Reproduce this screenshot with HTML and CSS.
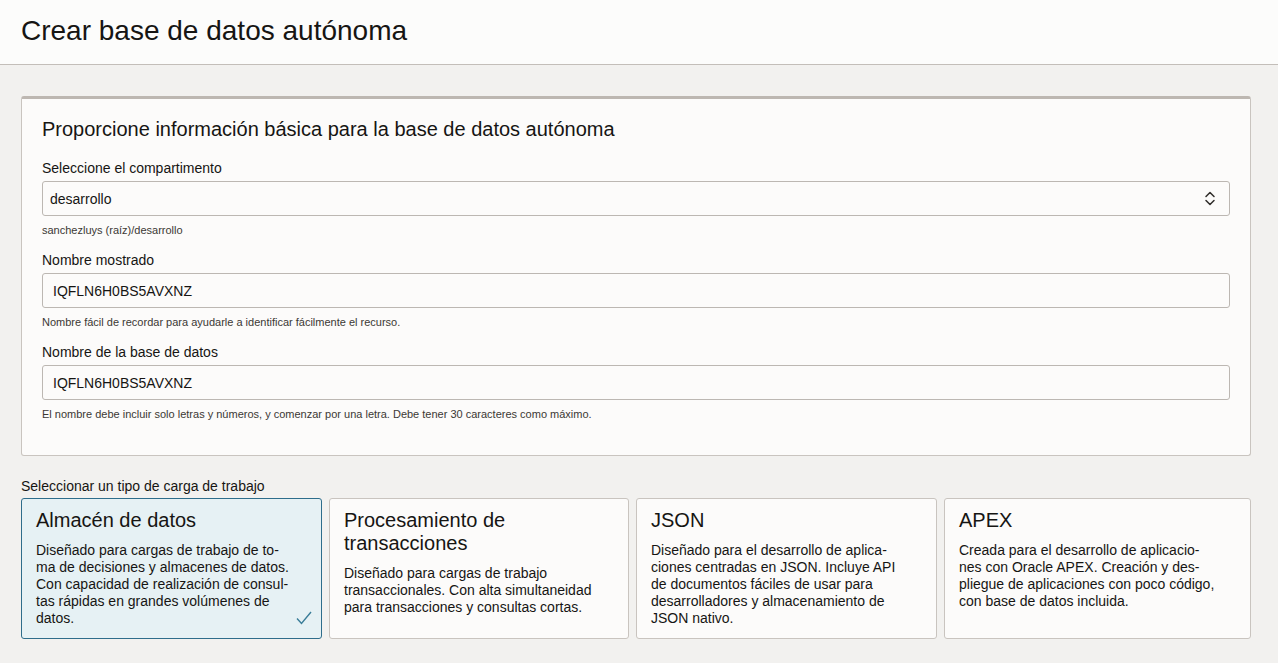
FILE: index.html
```html
<!DOCTYPE html>
<html lang="es">
<head>
<meta charset="utf-8">
<title>Crear base de datos autónoma</title>
<link rel="stylesheet" href="styles.css">
</head>
<body>
<header class="page-header">
  <h1 class="page-title">Crear base de datos autónoma</h1>
</header>
<main class="content">
  <section class="panel">
    <h2 class="panel-title">Proporcione información básica para la base de datos autónoma</h2>
    <div class="field">
      <label class="field-label">Seleccione el compartimento</label>
      <div class="control select">
        <span class="select-value">desarrollo</span>
        <svg class="select-icon" width="12" height="17" viewBox="0 0 12 17" aria-hidden="true">
          <path d="M2 6.5 L6 2.5 L10 6.5" fill="none" stroke="#2f2c29" stroke-width="1.5" stroke-linecap="round" stroke-linejoin="round"/>
          <path d="M2 10.5 L6 14.5 L10 10.5" fill="none" stroke="#2f2c29" stroke-width="1.5" stroke-linecap="round" stroke-linejoin="round"/>
        </svg>
      </div>
      <div class="field-help">sanchezluys (raíz)/desarrollo</div>
    </div>
    <div class="field">
      <label class="field-label">Nombre mostrado</label>
      <div class="control text">IQFLN6H0BS5AVXNZ</div>
      <div class="field-help">Nombre fácil de recordar para ayudarle a identificar fácilmente el recurso.</div>
    </div>
    <div class="field">
      <label class="field-label">Nombre de la base de datos</label>
      <div class="control text">IQFLN6H0BS5AVXNZ</div>
      <div class="field-help">El nombre debe incluir solo letras y números, y comenzar por una letra. Debe tener 30 caracteres como máximo.</div>
    </div>
  </section>

  <div class="workload-label">Seleccionar un tipo de carga de trabajo</div>
  <div class="cards">
    <div class="card selected">
      <div class="card-title">Almacén de datos</div>
      <div class="card-desc">Diseñado para cargas de trabajo de to-<br>ma de decisiones y almacenes de datos.<br>Con capacidad de realización de consul-<br>tas rápidas en grandes volúmenes de<br>datos.</div>
      <svg class="card-check" width="16" height="14" viewBox="0 0 16 14" aria-hidden="true">
        <path d="M1 7.5 L5.5 12.5 L15 1" fill="none" stroke="#3a7d98" stroke-width="1.4"/>
      </svg>
    </div>
    <div class="card">
      <div class="card-title">Procesamiento de<br>transacciones</div>
      <div class="card-desc">Diseñado para cargas de trabajo<br>transaccionales. Con alta simultaneidad<br>para transacciones y consultas cortas.</div>
    </div>
    <div class="card">
      <div class="card-title">JSON</div>
      <div class="card-desc">Diseñado para el desarrollo de aplica-<br>ciones centradas en JSON. Incluye API<br>de documentos fáciles de usar para<br>desarrolladores y almacenamiento de<br>JSON nativo.</div>
    </div>
    <div class="card">
      <div class="card-title">APEX</div>
      <div class="card-desc">Creada para el desarrollo de aplicacio-<br>nes con Oracle APEX. Creación y des-<br>pliegue de aplicaciones con poco código,<br>con base de datos incluida.</div>
    </div>
  </div>
</main>
</body>
</html>
```

FILE: styles.css
```css
* { box-sizing: border-box; }

html, body {
  margin: 0;
  padding: 0;
}

body {
  font-family: "Liberation Sans", Arial, sans-serif;
  color: #161513;
  background: #f2f1ef;
  min-height: 663px;
}

.page-header {
  height: 65px;
  background: #fcfcfb;
  border-bottom: 1px solid #c3beb9;
  display: flex;
  align-items: center;
  padding-left: 21px;
}

.page-title {
  margin: 0;
  font-size: 28px;
  font-weight: normal;
  line-height: 32px;
  color: #161513;
  position: relative;
  top: -1px;
}

.content {
  padding: 31px 27px 0 21px;
}

.panel {
  background: #fcfbfa;
  border: 1px solid #c9c4bf;
  border-top: 3px solid #bdb7b1;
  border-radius: 3px;
  padding: 19px 20px 35px;
}

.panel-title {
  margin: 0 0 19px;
  font-size: 20px;
  line-height: 23px;
  font-weight: normal;
  color: #161513;
}

.field + .field {
  margin-top: 16px;
}

.field-label {
  display: block;
  font-size: 14px;
  line-height: 17px;
  margin-bottom: 4px;
  color: #161513;
}

.control {
  height: 35px;
  border: 1px solid #bcb7b2;
  border-radius: 3px;
  background: #fcfbfa;
  display: flex;
  align-items: center;
  font-size: 14px;
  color: #161513;
}

.control.select {
  padding: 0 13px 0 7px;
  justify-content: space-between;
}

.control.text {
  padding: 0 10px;
}

.select-icon {
  display: block;
}

.field-help {
  margin-top: 8px;
  font-size: 11px;
  line-height: 12px;
  color: #3b3834;
}

.workload-label {
  margin-top: 22px;
  margin-bottom: 3px;
  font-size: 14px;
  line-height: 17px;
  color: #161513;
}

.cards {
  display: grid;
  grid-template-columns: 301px 300px 301px 1fr;
  gap: 7px;
}

.card {
  position: relative;
  background: #fcfbfa;
  border: 1px solid #c9c4bf;
  border-radius: 3px;
  padding: 10px 14px 11px;
}

.card.selected {
  background: #e6f1f4;
  border-color: #2e6d8b;
}

.card-title {
  font-size: 20px;
  line-height: 23px;
  margin-bottom: 10px;
  color: #161513;
}

.card-desc {
  font-size: 14px;
  line-height: 17px;
  color: #161513;
}

.card-check {
  position: absolute;
  right: 9px;
  bottom: 13px;
}
```
